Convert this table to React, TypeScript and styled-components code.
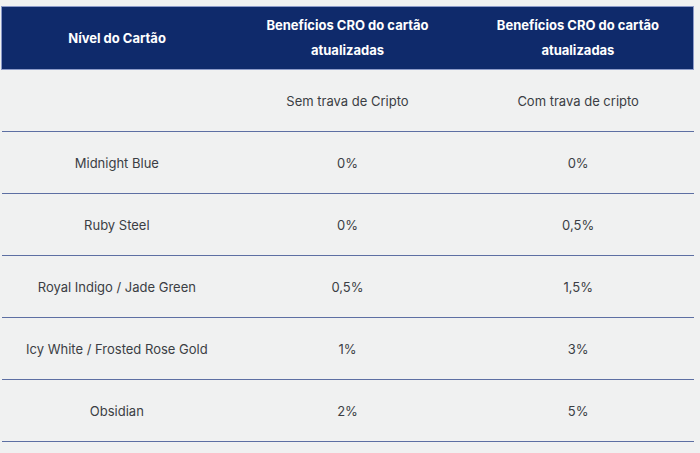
import React from "react";
import styled, { createGlobalStyle } from "styled-components";

const Global = createGlobalStyle`
  html, body { margin: 0; padding: 0; background: #f0f1f1; }
  body { font-family: Inter, Roboto, "Noto Sans", Arial, sans-serif; }
`;

const Page = styled.div`
  width: 700px;
  height: 453px;
  background: #f0f1f1;
  padding: 6px 6px 0 1px;
  box-sizing: border-box;
  overflow: hidden;
`;

const Table = styled.table`
  width: 693px;
  border-collapse: collapse;
  table-layout: fixed;
`;

const HeadRow = styled.tr`
  background: #0f2a6b;
  height: 63px;
`;

const Th = styled.th`
  color: #ffffff;
  font-weight: 700;
  font-size: 13px;
  line-height: 25px;
  text-align: center;
  vertical-align: middle;
  padding: 0 14px;
  border-top: 1px solid #8d9bc9;
  border-bottom: 1px solid #8d9bc9;
  &:first-child { border-left: 1px solid #8d9bc9; }
  &:last-child { border-right: 1px solid #8d9bc9; }
`;

const Row = styled.tr`
  height: 62px;
  border-bottom: 1px solid #5d6fa3;
`;

const Td = styled.td`
  color: #3b3e44;
  font-size: 13px;
  text-align: center;
  vertical-align: middle;
  padding: 0 8px;
`;

const rows: [string, string, string][] = [
  ["", "Sem trava de Cripto", "Com trava de cripto"],
  ["Midnight Blue", "0%", "0%"],
  ["Ruby Steel", "0%", "0,5%"],
  ["Royal Indigo / Jade Green", "0,5%", "1,5%"],
  ["Icy White / Frosted Rose Gold", "1%", "3%"],
  ["Obsidian", "2%", "5%"],
];

export default function App() {
  return (
    <>
      <Global />
      <Page>
        <Table>
          <thead>
            <HeadRow>
              <Th>Nível do Cartão</Th>
              <Th>Benefícios CRO do cartão atualizadas</Th>
              <Th>Benefícios CRO do cartão atualizadas</Th>
            </HeadRow>
          </thead>
          <tbody>
            {rows.map((r, i) => (
              <Row key={i}>
                <Td>{r[0]}</Td>
                <Td>{r[1]}</Td>
                <Td>{r[2]}</Td>
              </Row>
            ))}
          </tbody>
        </Table>
      </Page>
    </>
  );
}
